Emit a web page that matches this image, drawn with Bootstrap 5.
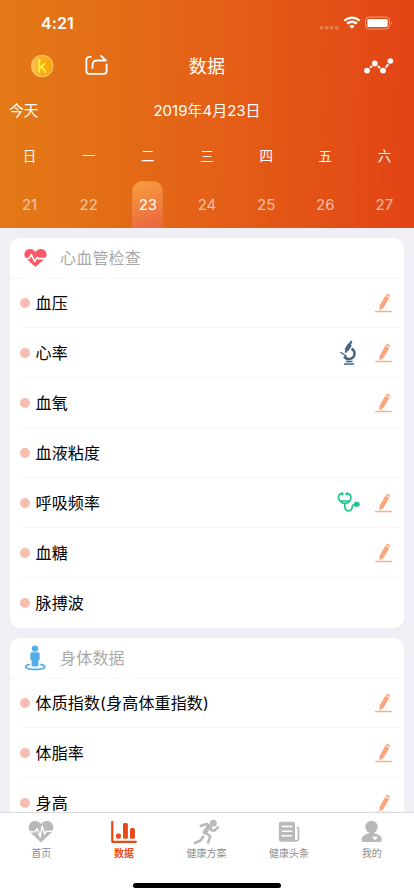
<!DOCTYPE html>
<html lang="zh-CN">
<head>
<meta charset="utf-8">
<meta name="viewport" content="width=device-width, initial-scale=1">
<title>数据</title>
<link href="https://cdn.jsdelivr.net/npm/bootstrap@5.3.0/dist/css/bootstrap.min.css" rel="stylesheet">
<style>
html, body { height: 100%; }
body { font-family: Inter, "Noto Sans CJK SC", sans-serif; background: #f0eff5; color: #000; overflow: hidden; line-height: 1.2; }
svg { display: block; flex: none; }
.screen { height: 896px; }
.hero { height: 228px; background: linear-gradient(91deg, #e37a16 0%, #e46217 48%, #e24415 100%); }
.status-bar { height: 44px; padding: 3px 21px 0 41px; }
.clock { font-size: 16px; font-weight: 600; letter-spacing: .1px; }
.title-bar { height: 44px; padding: 0 20px; }
.page-title { font-size: 18px; font-weight: 400; letter-spacing: .2px; padding-top: 1px; }
.date-bar { height: 45px; font-size: 15px; padding: 0 9px; }
.today { letter-spacing: -.4px; }
.side { width: 130px; }
.coin { margin-left: 11px; }
.share { margin-left: 31px; }
.week-names { height: 46px; font-size: 13.5px; padding-top: 1px; }
.week-days { height: 49px; font-size: 15px; color: rgba(255,255,255,.62); }
.day-number { height: 47px; }
.chosen-day { width: 31px; border-radius: 10px 10px 0 0; color: #fff; background: linear-gradient(160deg, #f99f40, #e9633f); box-shadow: inset 0 0 0 1px rgba(240,125,45,.45); }
.scroller { padding: 10px 10px 0; gap: 10px; min-height: 0; }
.panel { background: #fff; border-radius: 10px; flex: none; }
.panel-head { height: 41px; padding-left: 14px; border-bottom: 1px solid #f6f6f6; }
.panel-head h2 { font-size: 16px; font-weight: 400; color: #aaa; letter-spacing: .2px; margin-left: 13px; padding-top: 2px; }
.entries { margin-top: -1px; }
.entry { height: 50px; margin-left: 10px; padding-right: 12.5px; font-size: 16px; border-bottom: 1px solid #f7f7f7; }
.entry:last-child { border-bottom: 0; }
.entry-name { letter-spacing: .15px; margin-left: 5.5px; padding-top: 2px; }
.dot { width: 10px; height: 10px; background: #f6bdb0; }
.tools { gap: 14px; padding-top: 1px; }
.tabs { height: 84px; background: #fff; border-top: 1px solid #dcdce0; position: relative; color: #8f8f8f; font-size: 10px; padding-right: 1px; }
.tab-item { padding-top: 6px; gap: 2px; width: 20%; line-height: 12px; text-decoration: none; color: inherit; }
.tab-item.current { color: #e64b17; font-weight: 700; }
.home-bar { position: absolute; left: 133px; bottom: 8px; width: 148px; height: 5px; border-radius: 3px; background: #000; }
</style>
<script src="https://cdn.jsdelivr.net/npm/bootstrap@5.3.0/dist/js/bootstrap.bundle.min.js"></script>
</head>
<body>
<svg width="0" height="0" class="position-absolute" aria-hidden="true">
  <symbol id="pencil" viewBox="0 0 17 20">
    <path d="M.8 18.400h15.400" stroke="#faae88" stroke-width="1.500" stroke-linecap="round"/>
    <path d="M10.300 2.800l4 2.300-5.900 10-4 2.300.200-4.700z" fill="#faa57b"/>
    <path d="M10.900 1.900l.6-1q.4-.6 1-.2l2.100 1.200q.6.4.3 1l-.6 1z" fill="#faa57b"/>
  </symbol>
</svg>
<div class="screen d-flex flex-column">
  <header class="hero text-white flex-shrink-0">
    <div class="status-bar d-flex align-items-center justify-content-between">
      <span class="clock">4:21</span>
      <svg width="74" height="18" viewBox="0 0 74 16" fill="#fff">
        <g opacity=".25"><rect x="1" y="10" width="3.500" height="3.500" rx="1.200"/><rect x="6" y="10" width="3.500" height="3.500" rx="1.200"/><rect x="11" y="10" width="3.500" height="3.500" rx="1.200"/><rect x="16" y="10" width="3.500" height="3.500" rx="1.200"/></g>
        <g transform="translate(0 -1)">
        <g fill="none" stroke="#fff" stroke-width="2.300"><path d="M25.300 5.700q7.700-6.200 15.400 0"/><path d="M28.100 8.700q4.900-3.900 9.800 0"/></g>
        <path d="M30.400 11q2.600-2.200 5.200 0L33 13.700z"/>
        <rect x="46.500" y="2" width="24" height="12" rx="3.600" fill="none" stroke="#fff" opacity=".45"/>
        <rect x="48.300" y="3.900" width="20.400" height="8.200" rx="1.600"/><path d="M71.800 6q1.800 2 0 4z" opacity=".55"/>
        </g>
      </svg>
    </div>
    <nav class="title-bar d-flex align-items-center">
      <div class="side d-flex align-items-center">
        <svg class="coin" width="23" height="24" viewBox="0 0 23 24">
          <defs><linearGradient id="coin"><stop offset="0" stop-color="#fac14f"/><stop offset=".5" stop-color="#fbac19"/><stop offset="1" stop-color="#fda400"/></linearGradient></defs>
          <circle cx="11.200" cy="12.700" r="11" fill="#d8873b"/><circle cx="11.200" cy="12" r="10.600" fill="url(#coin)" stroke="#f5bd61" stroke-width="1.400"/>
          <path d="M8.200 5v13.500M14.300 9.300l-5.800 5M10.600 12.600l4.300 5.900" fill="none" stroke="#ffed3f" stroke-width="2"/>
        </svg>
        <svg class="share" width="24" height="24" viewBox="0 0 24 24" fill="none" stroke="#fff" stroke-width="1.800" stroke-linecap="round" stroke-linejoin="round">
          <path d="M5.800 2.900H4.300Q1.400 2.900 1.400 5.800v11.300q0 2.700 2.600 2.700h15q2.600 0 2.600-2.700v-6.600"/><path d="M7.500 14v-3.200q0-4.300 4.300-4.300h9.200l-5-4.700"/>
        </svg>
      </div>
      <h1 class="page-title m-0 mx-auto">数据</h1>
      <div class="side d-flex justify-content-end">
        <svg width="30" height="18" viewBox="0 0 30 18" fill="#fff"><path d="M6 10.800l2-1.800M13.600 8.900l2.600 2.300M21.600 10.600l2.700-3.500" stroke="#fff" stroke-width="1.900"/><circle cx="3" cy="13.600" r="2.900"/><circle cx="10.800" cy="6.400" r="2.800"/><circle cx="19" cy="13.600" r="2.900"/><circle cx="26.400" cy="4" r="2.800"/></svg>
      </div>
    </nav>
    <div class="date-bar d-flex align-items-center"><span class="side today">今天</span><span class="mx-auto">2019年4月23日</span><span class="side"></span></div>
    <div class="week-names row g-0 align-items-center text-center">
      <span class="col">日</span><span class="col">一</span><span class="col">二</span><span class="col">三</span><span class="col">四</span><span class="col">五</span><span class="col">六</span>
    </div>
    <div class="week-days row g-0 align-items-end text-center">
      <div class="col day"></div><div class="col day"></div><div class="col day"></div><div class="col day"></div><div class="col day"></div><div class="col day"></div><div class="col day"></div>
    </div>
  </header>

  <main class="scroller d-flex flex-column flex-grow-1 overflow-hidden">
    <section class="panel">
      <div class="panel-head d-flex align-items-center">
        <svg width="23" height="20" viewBox="0 0 23 20"><path d="M11.500 19L2 10.500C-1.300 7 .8 1.200 6 1.100c2.400 0 4.200 1.100 5.500 3 1.300-1.900 3.100-3 5.500-3 5.200.1 7.300 5.900 4 9.400z" fill="#fb5967"/><path d="M0 10.600h5l2.300-4 3.400 6.700 2.500-4 1.500 1.300H23" fill="none" stroke="#fff" stroke-width="1.600" stroke-linejoin="round"/></svg>
        <h2 class="mb-0">心血管检查</h2>
      </div>
      <div class="entries" data-items="血压:edit|心率:scope edit|血氧:edit|血液粘度:|呼吸频率:steth edit|血糖:edit|脉搏波:"></div>
    </section>
    <section class="panel">
      <div class="panel-head d-flex align-items-center">
        <svg width="23" height="26" viewBox="0 0 23 26" fill="#55ade5"><path d="M6 19.300c-8 2-4 5.100 5.300 5.100s13.400-3.100 4.900-5.100" fill="none" stroke="#55ade5" stroke-width="1.700"/><circle cx="11" cy="3.600" r="3.200"/><path d="M8 7.300h6q1.700 0 1.700 1.700v5q0 1.200-1.300 1.200v5q0 1.200-1.200 1.200H8.800q-1.200 0-1.200-1.200v-5q-1.300 0-1.300-1.200V9q0-1.700 1.700-1.700z"/></svg>
        <h2 class="mb-0">身体数据</h2>
      </div>
      <div class="entries" data-items="体质指数(身高体重指数):edit|体脂率:edit|身高:edit"></div>
    </section>
  </main>

  <footer class="tabs d-flex flex-shrink-0 align-items-start">
    <a class="tab-item d-flex flex-column align-items-center">
      <svg width="26" height="26" viewBox="0 0 26 26"><path d="M13 23.400L2.600 13.500C-1.200 9 1 2.200 6.800 2.100c2.700 0 4.700 1.100 6.200 3 1.500-1.900 3.500-3 6.200-3 5.800.1 8 6.900 4.200 11.400z" fill="#b9b9b9"/><path d="M0 12.900h7l2.200-3.300 3 8.400 2-11 2.500 8 1.500-2.600H26" fill="none" stroke="#fff" stroke-width="1.400" stroke-linejoin="round"/></svg>
      <span>首页</span>
    </a>
    <a class="tab-item current d-flex flex-column align-items-center">
      <svg width="26" height="26" viewBox="0 0 26 26" fill="#e64b17"><path d="M1.300 2.800v20h23.500" fill="none" stroke="#e64b17" stroke-width="2.300" stroke-linecap="round" stroke-linejoin="round"/><rect x="5" y="14.500" width="4.900" height="5.300" rx="1.700"/><rect x="12" y="4" width="4.900" height="15.800" rx="1.500"/><rect x="19" y="9" width="4.900" height="10.800" rx="1.500"/></svg>
      <span>数据</span>
    </a>
    <a class="tab-item d-flex flex-column align-items-center">
      <svg width="26" height="26" viewBox="0 0 26 26" fill="none" stroke="#b9b9b9" stroke-width="2.600" stroke-linecap="round" stroke-linejoin="round"><circle cx="20.300" cy="4.200" r="3.400" fill="#b9b9b9" stroke="none"/><path d="M7.800 7l4.500-1.800q1.500-.3 2.700.5l2.200 1.600-4.700 6.600 4.800 3.300-2.200 6.300"/><path d="M17.300 8l1.200 3.200 3 .4 3.300-3.200M10.200 17.500l-2.700 4-5.500 2.500"/><path d="M15.300 7.200l-4.100 6.300" stroke-width="3.400"/></svg>
      <span>健康方案</span>
    </a>
    <a class="tab-item d-flex flex-column align-items-center">
      <svg width="22" height="26" viewBox="0 0 22 26"><path d="M3.200 2.800h12.100q1.700 0 1.700 1.700v18.300H3.200q-2.300 0-2.300-2.300V4.800q0-2 2.300-2z" fill="#b9b9b9"/><path d="M4.200 7.600h9.500M4.200 12.200h9.500M4.200 16.800h9.500" stroke="#fff" stroke-width="1.500" stroke-linecap="round"/><path d="M18.800 8.300q1.700 0 1.700 2v9q0 2.700-3 2.700h-2" fill="none" stroke="#b9b9b9" stroke-width="1.700"/></svg>
      <span>健康头条</span>
    </a>
    <a class="tab-item d-flex flex-column align-items-center">
      <svg width="22" height="26" viewBox="0 0 22 26" fill="#b9b9b9"><circle cx="10.500" cy="8" r="6.200"/><path d="M8 12v2.500q-6.800.8-7.500 6.300-.2 2.200 2 2.200h16.400q2.200 0 2-2.200-.5-5.500-7.500-6.300V12z"/><path d="M14 21.300l-2.200-2.200c-.9-1.500 1.400-2.700 2.200-1.100.8-1.600 3.100-.4 2.200 1.100z" fill="#fff"/></svg>
      <span>我的</span>
    </a>
    <div class="home-bar"></div>
  </footer>
</div>
<script>
const icons = {
  edit: '<svg width="17" height="20"><use href="#pencil"/></svg>',
  scope: '<svg width="22" height="26" viewBox="0 0 22 26" fill="none" stroke="#426482"><path d="M12.500 8.600c4.500 2.500 4 9.500-1.800 10.400-2.400.3-4.400-.8-5.500-2.700" stroke-width="2.500"/><path d="M1.300 12.300l6.500 4" stroke-width="1.300"/><path d="M11 4.300L7.300 10.400" stroke-width="4.200"/><path d="M12.500 1l-2 4" stroke-width="2.300"/><path d="M7.700 10l-1.300 2.600" stroke-width="2"/><path d="M7 21.500h6.500M5 24h10" stroke-width="1.300"/></svg>',
  steth: '<svg width="24" height="24" viewBox="0 0 24 24" fill="none" stroke="#20c58c" stroke-width="1.700" stroke-linecap="round"><path d="M5 2.700C1.300 2.700.9 6.800 2.300 8.900 4 11.700 5.800 12.400 7.800 12.400s4.300-1 5.500-3.500c1.200-2.400.6-6.200-3-6.200M3.300 10h9M7.800 12.400v2.700c0 3.300 1.500 4.700 3.700 4.700 3.200 0 3.500-2.200 3.700-3.800.2-1.500 1-2.500 2.500-2.500"/><circle cx="5" cy="2.800" r=".8"/><circle cx="10" cy="2.800" r=".8"/><ellipse cx="19.700" cy="13.300" rx="2.600" ry="2.300" fill="#20c58c" stroke-width="1"/></svg>'
};
document.querySelectorAll('.entries').forEach(list => {
  list.innerHTML = list.dataset.items.split('|').map(item => {
    const [name, tools] = item.split(':');
    return `<div class="entry d-flex align-items-center"><span class="dot rounded-circle"></span><span class="entry-name">${name}</span><span class="tools d-flex align-items-center ms-auto">${tools.split(' ').map(t => icons[t] || '').join('')}</span></div>`;
  }).join('');
});
document.querySelectorAll('.day').forEach((cell, i) => {
  const n = 21 + i;
  cell.innerHTML = `<span class="day-number ${n === 23 ? 'chosen-day ' : ''}d-flex align-items-center justify-content-center mx-auto">${n}</span>`;
});
</script>
</body>
</html>
